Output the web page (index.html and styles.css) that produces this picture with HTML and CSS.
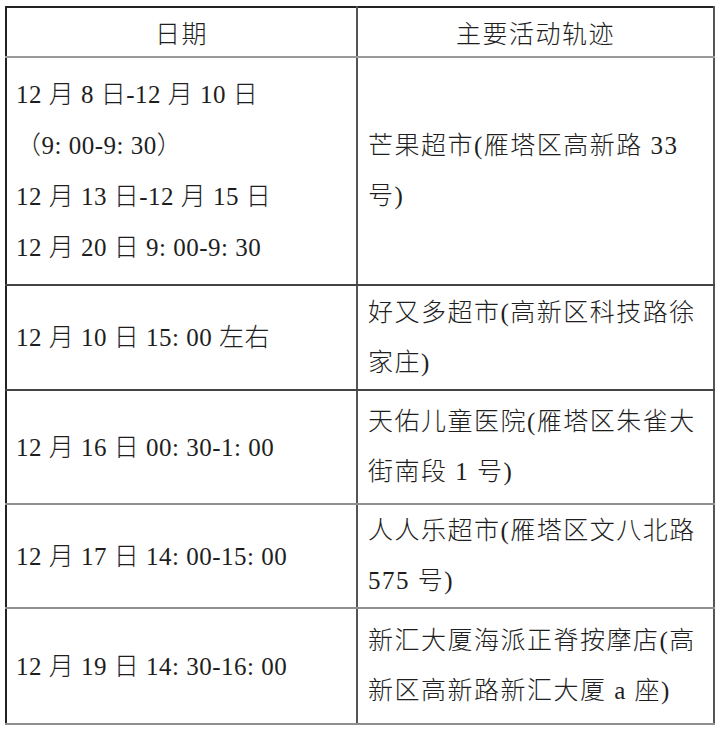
FILE: index.html
```html
<!DOCTYPE html>
<html lang="zh-CN">
<head>
<meta charset="utf-8">
<title>主要活动轨迹</title>
<link rel="stylesheet" href="styles.css">
</head>
<body>
<table class="trace">
  <thead>
    <tr class="head">
      <th class="col-date">日期</th>
      <th class="col-place">主要活动轨迹</th>
    </tr>
  </thead>
  <tbody>
    <tr class="r1">
      <td class="date">12 月 8 日-12 月 10 日<br>（9: 00-9: 30）<br>12 月 13 日-12 月 15 日<br>12 月 20 日 9: 00-9: 30</td>
      <td class="place">芒果超市(雁塔区高新路 33<br>号)</td>
    </tr>
    <tr class="r2">
      <td class="date">12 月 10 日 15: 00 左右</td>
      <td class="place">好又多超市(高新区科技路徐<br>家庄)</td>
    </tr>
    <tr class="r3">
      <td class="date">12 月 16 日 00: 30-1: 00</td>
      <td class="place">天佑儿童医院(雁塔区朱雀大<br>街南段 1 号)</td>
    </tr>
    <tr class="r4">
      <td class="date">12 月 17 日 14: 00-15: 00</td>
      <td class="place">人人乐超市(雁塔区文八北路<br>575 号)</td>
    </tr>
    <tr class="r5">
      <td class="date">12 月 19 日 14: 30-16: 00</td>
      <td class="place">新汇大厦海派正脊按摩店(高<br>新区高新路新汇大厦 a 座)</td>
    </tr>
  </tbody>
</table>
</body>
</html>
```

FILE: styles.css
```css
html, body {
  margin: 0;
  padding: 0;
  background: #ffffff;
}

body {
  padding: 6px 0 0 5px;
  font-family: "Liberation Serif", "Noto Sans CJK SC", serif;
  color: #1e1e1e;
}

.trace {
  border-collapse: collapse;
  width: 710px;
  table-layout: fixed;
  border: 2px solid #222222;
}

.col-date {
  width: 349px;
}

.trace th,
.trace td {
  padding: 0 0 0 10px;
  font-size: 25px;
  font-weight: 300;
  letter-spacing: 1.5px;
  white-space: nowrap;
  vertical-align: middle;
  text-align: left;
}

.trace th {
  text-align: center;
  padding: 0;
  height: 48px;
  border-bottom: 2px solid #9a9a9a;
  border-right: 2px solid #555555;
}

.trace td {
  border-bottom: 2px solid #8f8f8f;
  border-right: 2px solid #555555;
  line-height: 50px;
}

.trace td.date {
  padding-left: 9px;
  letter-spacing: 0.5px;
  line-height: 51px;
}

.r1 td { height: 226px; }
.r2 td { height: 103px; }
.r3 td { height: 112px; }
.r4 td { height: 102px; }
.r5 td { height: 114px; }

.r1 td, .r2 td { border-bottom-color: #444444; }
```
